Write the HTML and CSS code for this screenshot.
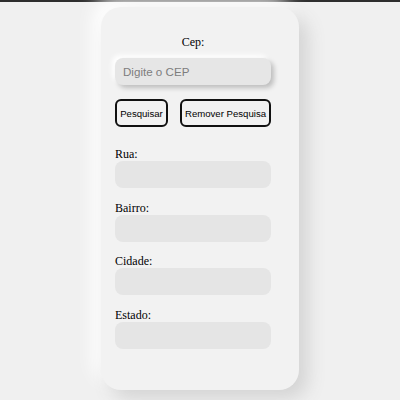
FILE: index.html
```html
<!DOCTYPE html>
<html lang="pt-BR">
<head>
<meta charset="utf-8">
<title>Busca CEP</title>
<link rel="stylesheet" href="styles.css">
</head>
<body>
<div class="topbar"></div>
<main class="card">
  <label class="cep-label" for="cep">Cep:</label>
  <input class="cep-input" id="cep" type="text" placeholder="Digite o CEP">
  <div class="actions">
    <button class="btn btn-search" type="button">Pesquisar</button>
    <button class="btn btn-remove" type="button">Remover Pesquisa</button>
  </div>
  <div class="fields">
    <div class="field">
      <label class="field-label" for="rua">Rua:</label>
      <input class="field-input" id="rua" type="text">
    </div>
    <div class="field">
      <label class="field-label" for="bairro">Bairro:</label>
      <input class="field-input" id="bairro" type="text">
    </div>
    <div class="field">
      <label class="field-label" for="cidade">Cidade:</label>
      <input class="field-input" id="cidade" type="text">
    </div>
    <div class="field">
      <label class="field-label" for="estado">Estado:</label>
      <input class="field-input" id="estado" type="text">
    </div>
  </div>
</main>
</body>
</html>
```
FILE: styles.css
```css
* { box-sizing: border-box; }
html, body {
  margin: 0;
  padding: 0;
  background: #f0f0f0;
  height: 400px;
  overflow: hidden;
}
.topbar {
  height: 2px;
  background: #2e2e2e;
}
.card {
  width: 198px;
  height: 383px;
  margin: 5px auto 0;
  border-radius: 20px;
  background: #f2f2f2;
  box-shadow: 9px 9px 18px #d4d4d4, -8px -8px 18px #ffffff;
  padding: 28px 28px 0 14px;
  display: flex;
  flex-direction: column;
  font-family: "Liberation Serif", "Times New Roman", serif;
  font-size: 12px;
  color: #000;
}
.cep-label {
  display: block;
  text-align: center;
  line-height: 14px;
}
.cep-input {
  margin-top: 9px;
  width: 156px;
  height: 27px;
  border: none;
  outline: none;
  border-radius: 8px;
  background: #e6e6e6;
  box-shadow: 3px 3px 5px rgba(0,0,0,0.22), -3px -3px 5px #ffffff;
  padding: 0 8px;
  font-family: "Liberation Sans", Arial, sans-serif;
  font-size: 11.6px;
}
.cep-input::placeholder { color: #7d7d7d; }
.actions {
  margin-top: 14px;
  display: flex;
  gap: 12px;
}
.btn {
  height: 28px;
  padding: 0;
  border: 2px solid #111;
  border-radius: 6px;
  background: transparent;
  font-family: "Liberation Sans", Arial, sans-serif;
  font-size: 9.6px;
  color: #000;
  text-align: center;
}
.btn-search { width: 53px; }
.btn-remove { width: 91px; }
.fields {
  margin-top: 20px;
  display: flex;
  flex-direction: column;
  gap: 12.5px;
}
.field {
  display: flex;
  flex-direction: column;
}
.field-label {
  line-height: 14px;
}
.field-input {
  width: 156px;
  height: 27px;
  border: none;
  outline: none;
  border-radius: 8px;
  background: #e5e5e5;
}
```
